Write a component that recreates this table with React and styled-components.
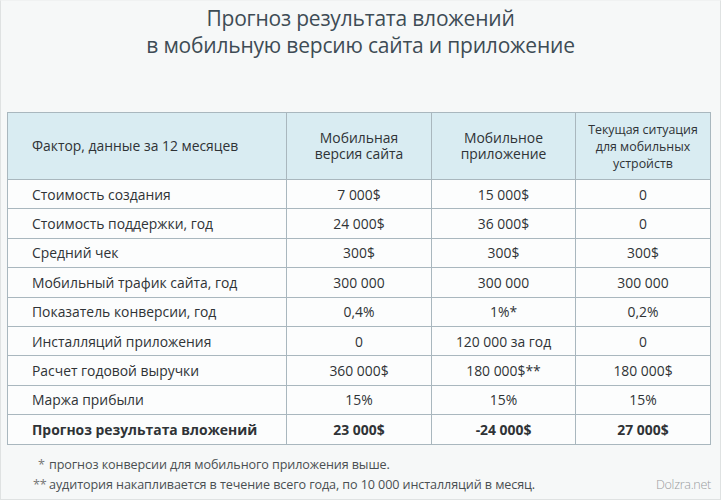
import React from "react";
import styled, { createGlobalStyle } from "styled-components";

const Global = createGlobalStyle`
  html, body { margin: 0; padding: 0; background: #f6f8f8; }
  * { box-sizing: border-box; }
`;

const Page = styled.div`
  width: 721px;
  height: 500px;
  background: #f6f8f8;
  border: 1px solid #dfe2e2;
  border-top-color: #f0f2f2;
  display: flex;
  flex-direction: column;
  font-family: "Open Sans", "Noto Sans", sans-serif;
  color: #2f3336;
`;

const Title = styled.h1`
  margin: 0;
  padding-top: 4px;
  text-align: center;
  font-weight: 400;
  font-size: 21px;
  line-height: 27px;
  color: #3e4c55;
  letter-spacing: -0.2px;
`;

const TableWrap = styled.div`
  margin-top: 53px;
  padding-left: 6px;
`;

const Table = styled.table`
  width: 703px;
  border-collapse: collapse;
  table-layout: fixed;
  border: 1px solid #a9b7be;
  font-size: 13.9px;
  color: #2f3336;
`;

const HeadCell = styled.th`
  background: #d9ecf2;
  border: 1px solid #a9b7be;
  height: 67px;
  font-weight: 400;
  text-align: ${(p) => (p.$left ? "left" : "center")};
  padding: ${(p) => (p.$left ? "0 0 0 24px" : "0 6px")};
  font-size: ${(p) => (p.$small ? "12.4px" : "13.9px")};
  line-height: ${(p) => (p.$small ? "17px" : "16.5px")};
  color: #2f3336;
`;

const Row = styled.tr`
  height: 29.4px;
`;

const Cell = styled.td`
  border: 1px solid #a9b7be;
  background: #fcfdfd;
  padding: ${(p) => (p.$left ? "0 0 0 24px" : "0")};
  text-align: ${(p) => (p.$left ? "left" : "center")};
  font-weight: ${(p) => (p.$bold ? 700 : 400)};
  white-space: nowrap;
`;

const Notes = styled.div`
  margin-top: 10px;
  display: flex;
  justify-content: space-between;
  align-items: flex-end;
  padding: 0 9px 0 32px;
`;

const NoteList = styled.div`
  font-size: 12.6px;
  line-height: 20px;
  color: #4a4f52;
  letter-spacing: -0.1px;
`;

const Star = styled.span`
  display: inline-block;
  width: ${(p) => (p.$double ? "16px" : "11px")};
  margin-left: ${(p) => (p.$double ? "0" : "5px")};
  color: #777;
`;

const Watermark = styled.div`
  font-size: 12.6px;
  line-height: 20px;
  color: #9a9d9f;
  font-weight: 300;
  letter-spacing: -0.3px;
`;

const rows = [
  ["Стоимость создания", "7 000$", "15 000$", "0"],
  ["Стоимость поддержки, год", "24 000$", "36 000$", "0"],
  ["Средний чек", "300$", "300$", "300$"],
  ["Мобильный трафик сайта, год", "300 000", "300 000", "300 000"],
  ["Показатель конверсии, год", "0,4%", "1%*", "0,2%"],
  ["Инсталляций приложения", "0", "120 000 за год", "0"],
  ["Расчет годовой выручки", "360 000$", "180 000$**", "180 000$"],
  ["Маржа прибыли", "15%", "15%", "15%"],
];

export default function App() {
  return (
    <Page>
      <Global />
      <Title>
        Прогноз результата вложений
        <br />
        в мобильную версию сайта и приложение
      </Title>
      <TableWrap>
        <Table>
          <colgroup>
            <col style={{ width: 279 }} />
            <col style={{ width: 145 }} />
            <col style={{ width: 144 }} />
            <col style={{ width: 135 }} />
          </colgroup>
          <thead>
            <tr>
              <HeadCell $left>Фактор, данные за 12 месяцев</HeadCell>
              <HeadCell>
                Мобильная
                <br />
                версия сайта
              </HeadCell>
              <HeadCell>
                Мобильное
                <br />
                приложение
              </HeadCell>
              <HeadCell $small>
                Текущая ситуация
                <br />
                для мобильных
                <br />
                устройств
              </HeadCell>
            </tr>
          </thead>
          <tbody>
            {rows.map((r) => (
              <Row key={r[0]}>
                <Cell $left>{r[0]}</Cell>
                <Cell>{r[1]}</Cell>
                <Cell>{r[2]}</Cell>
                <Cell>{r[3]}</Cell>
              </Row>
            ))}
            <Row>
              <Cell $left $bold>Прогноз результата вложений</Cell>
              <Cell $bold>23 000$</Cell>
              <Cell $bold>-24 000$</Cell>
              <Cell $bold>27 000$</Cell>
            </Row>
          </tbody>
        </Table>
      </TableWrap>
      <Notes>
        <NoteList>
          <div>
            <Star>*</Star>прогноз конверсии для мобильного приложения выше.
          </div>
          <div>
            <Star $double>**</Star>аудитория накапливается в течение всего года, по 10 000 инсталляций в месяц.
          </div>
        </NoteList>
        <Watermark>Dolzra.net</Watermark>
      </Notes>
    </Page>
  );
}
